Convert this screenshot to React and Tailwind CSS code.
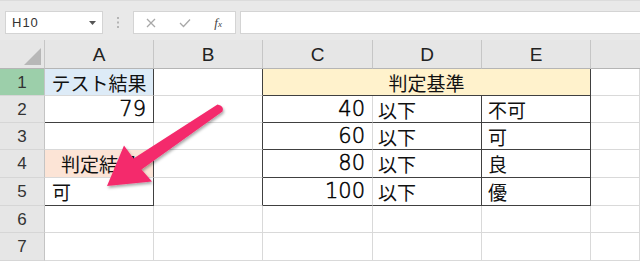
const hdrFont = "font-['Liberation_Sans',Arial,sans-serif]";

const Cell = ({ className = "", children }) => (
  <div className={`flex items-center border-r border-b border-[#d9d9d9] overflow-visible whitespace-nowrap ${className}`}>
    {children}
  </div>
);

const Num = ({ children }) => (
  <span className="font-['DejaVu_Sans',sans-serif] font-extralight text-[21px] leading-none text-black [-webkit-text-stroke:0.5px_#000]">
    {children}
  </span>
);

const RowHead = ({ n, active }) => (
  <div
    className={`flex items-center justify-center border-r border-b border-[#c4c4c4] border-b-[#d6d6d6] text-[17px] text-[#333] ${hdrFont} ${
      active ? "bg-[#9ccfaa]" : "bg-[#e6e6e6]"
    }`}
  >
    {n}
  </div>
);

const ColHead = ({ label }) => (
  <div className={`flex items-center justify-center bg-[#e6e6e6] border-r border-b border-[#c6c6c6] border-b-[#b5b5b5] text-[19px] text-[#222] ${hdrFont}`}>
    {label}
  </div>
);

const Toolbar = () => (
  <div className="h-[40px] bg-[#e9e9e9] border-t border-[#dcdcdc] flex items-start pt-[10px] pl-[5px]">
    <div className="w-[98px] h-[23px] bg-white border border-[#d4d4d4] flex items-center justify-between pl-[6px] pr-[6px]">
      <span className={`text-[13px] text-[#333] tracking-[1px] ${hdrFont}`}>H10</span>
      <svg width="7" height="4" viewBox="0 0 7 4">
        <path d="M0 0 L7 0 L3.5 4 Z" fill="#555" />
      </svg>
    </div>
    <div className="w-[30px] h-[23px] flex items-center justify-center">
      <svg width="2" height="11" viewBox="0 0 2 11">
        <rect x="0" y="0" width="2" height="2" fill="#b5b5b5" />
        <rect x="0" y="4.5" width="2" height="2" fill="#b5b5b5" />
        <rect x="0" y="9" width="2" height="2" fill="#b5b5b5" />
      </svg>
    </div>
    <div className="w-[103px] h-[23px] bg-white border border-[#d4d4d4] flex items-center">
      <div className="w-[34px] flex justify-center">
        <svg width="10" height="10" viewBox="0 0 10 10">
          <path d="M1 1 L9 9 M9 1 L1 9" stroke="#a8a8a8" strokeWidth="1.3" />
        </svg>
      </div>
      <div className="w-[34px] flex justify-center">
        <svg width="12" height="10" viewBox="0 0 12 10">
          <path d="M1 5 L4.5 8.5 L11 1.5" stroke="#a8a8a8" strokeWidth="1.3" fill="none" />
        </svg>
      </div>
      <div className="w-[34px] flex justify-center">
        <span className="font-['Liberation_Serif',serif] italic text-[13px] text-[#444] leading-none">
          f<span className="text-[9px]">x</span>
        </span>
      </div>
    </div>
    <div className="ml-[4px] flex-1 h-[23px] bg-white border border-[#d4d4d4] border-r-0" />
  </div>
);

const Arrow = () => (
  <svg className="absolute top-0 left-0 pointer-events-none" width="640" height="261" viewBox="0 0 640 261">
    <defs>
      <filter id="sh" x="-20%" y="-20%" width="140%" height="140%">
        <feDropShadow dx="1" dy="2" stdDeviation="1.5" floodColor="#000" floodOpacity="0.35" />
      </filter>
    </defs>
    <path
      d="M217.5 104.5 L133.5 158.5 L124 145.5 L107 186 L152 181.5 L141.5 169.5 L222.5 111.5 Q224.5 106 217.5 104.5 Z"
      fill="#f42b6c"
      filter="url(#sh)"
    />
  </svg>
);

export default function App() {
  const dark = "border-r-[#404040]";
  const darkB = "border-b-[#404040]";
  const cellFont = "font-['Noto_Sans_CJK_JP','Noto_Sans_CJK_SC',sans-serif] text-[19px] text-[#111] leading-none";

  return (
    <div className={`relative w-[640px] h-[261px] overflow-hidden bg-white ${cellFont}`}>
      <Toolbar />
      <div className="grid grid-cols-[45px_109px_109px_110px_109px_109px_49px] grid-rows-[29px_27px_27px_27px_28px_28px_27px_28px]">
        {/* header row */}
        <div className="relative bg-[#e6e6e6] border-r border-b border-[#c6c6c6] border-b-[#b5b5b5]">
          <svg className="absolute right-[3px] bottom-[3px]" width="17" height="17" viewBox="0 0 17 17">
            <path d="M17 0 L17 17 L0 17 Z" fill="#b7b7b7" />
          </svg>
        </div>
        <ColHead label="A" />
        <ColHead label="B" />
        <ColHead label="C" />
        <ColHead label="D" />
        <ColHead label="E" />
        <div className="bg-[#e6e6e6] border-b border-[#b5b5b5]" />

        {/* row 1 */}
        <RowHead n="1" active />
        <Cell className={`bg-[#ddebf7] justify-center ${dark}`}>テスト結果</Cell>
        <Cell className={dark}></Cell>
        <Cell className={`col-span-3 bg-[#fff2cc] justify-center ${dark} ${darkB}`}>判定基準</Cell>
        <Cell />

        {/* row 2 */}
        <RowHead n="2" />
        <Cell className={`justify-end pr-[7px] ${dark} ${darkB}`}><Num>79</Num></Cell>
        <Cell className={dark}></Cell>
        <Cell className={`justify-end pr-[7px] ${darkB}`}><Num>40</Num></Cell>
        <Cell className={`pl-[5px] ${dark} ${darkB}`}>以下</Cell>
        <Cell className={`pl-[6px] ${dark} ${darkB}`}>不可</Cell>
        <Cell />

        {/* row 3 */}
        <RowHead n="3" />
        <Cell />
        <Cell className={dark}></Cell>
        <Cell className={`justify-end pr-[7px] ${darkB}`}><Num>60</Num></Cell>
        <Cell className={`pl-[5px] ${dark} ${darkB}`}>以下</Cell>
        <Cell className={`pl-[6px] ${dark} ${darkB}`}>可</Cell>
        <Cell />

        {/* row 4 */}
        <RowHead n="4" />
        <Cell className={`bg-[#fce4d6] justify-center ${dark}`}>判定結果</Cell>
        <Cell className={dark}></Cell>
        <Cell className={`justify-end pr-[7px] ${darkB}`}><Num>80</Num></Cell>
        <Cell className={`pl-[5px] ${dark} ${darkB}`}>以下</Cell>
        <Cell className={`pl-[6px] ${dark} ${darkB}`}>良</Cell>
        <Cell />

        {/* row 5 */}
        <RowHead n="5" />
        <Cell className={`pl-[7px] ${dark} ${darkB}`}>可</Cell>
        <Cell className={dark}></Cell>
        <Cell className={`justify-end pr-[7px] ${darkB}`}><Num>100</Num></Cell>
        <Cell className={`pl-[5px] ${dark} ${darkB}`}>以下</Cell>
        <Cell className={`pl-[6px] ${dark} ${darkB}`}>優</Cell>
        <Cell />

        {/* rows 6-7 */}
        {["6", "7"].map((n) => (
          <div key={n} className="contents">
            <RowHead n={n} />
            <Cell />
            <Cell />
            <Cell />
            <Cell />
            <Cell />
            <Cell />
          </div>
        ))}
      </div>
      <Arrow />
    </div>
  );
}
